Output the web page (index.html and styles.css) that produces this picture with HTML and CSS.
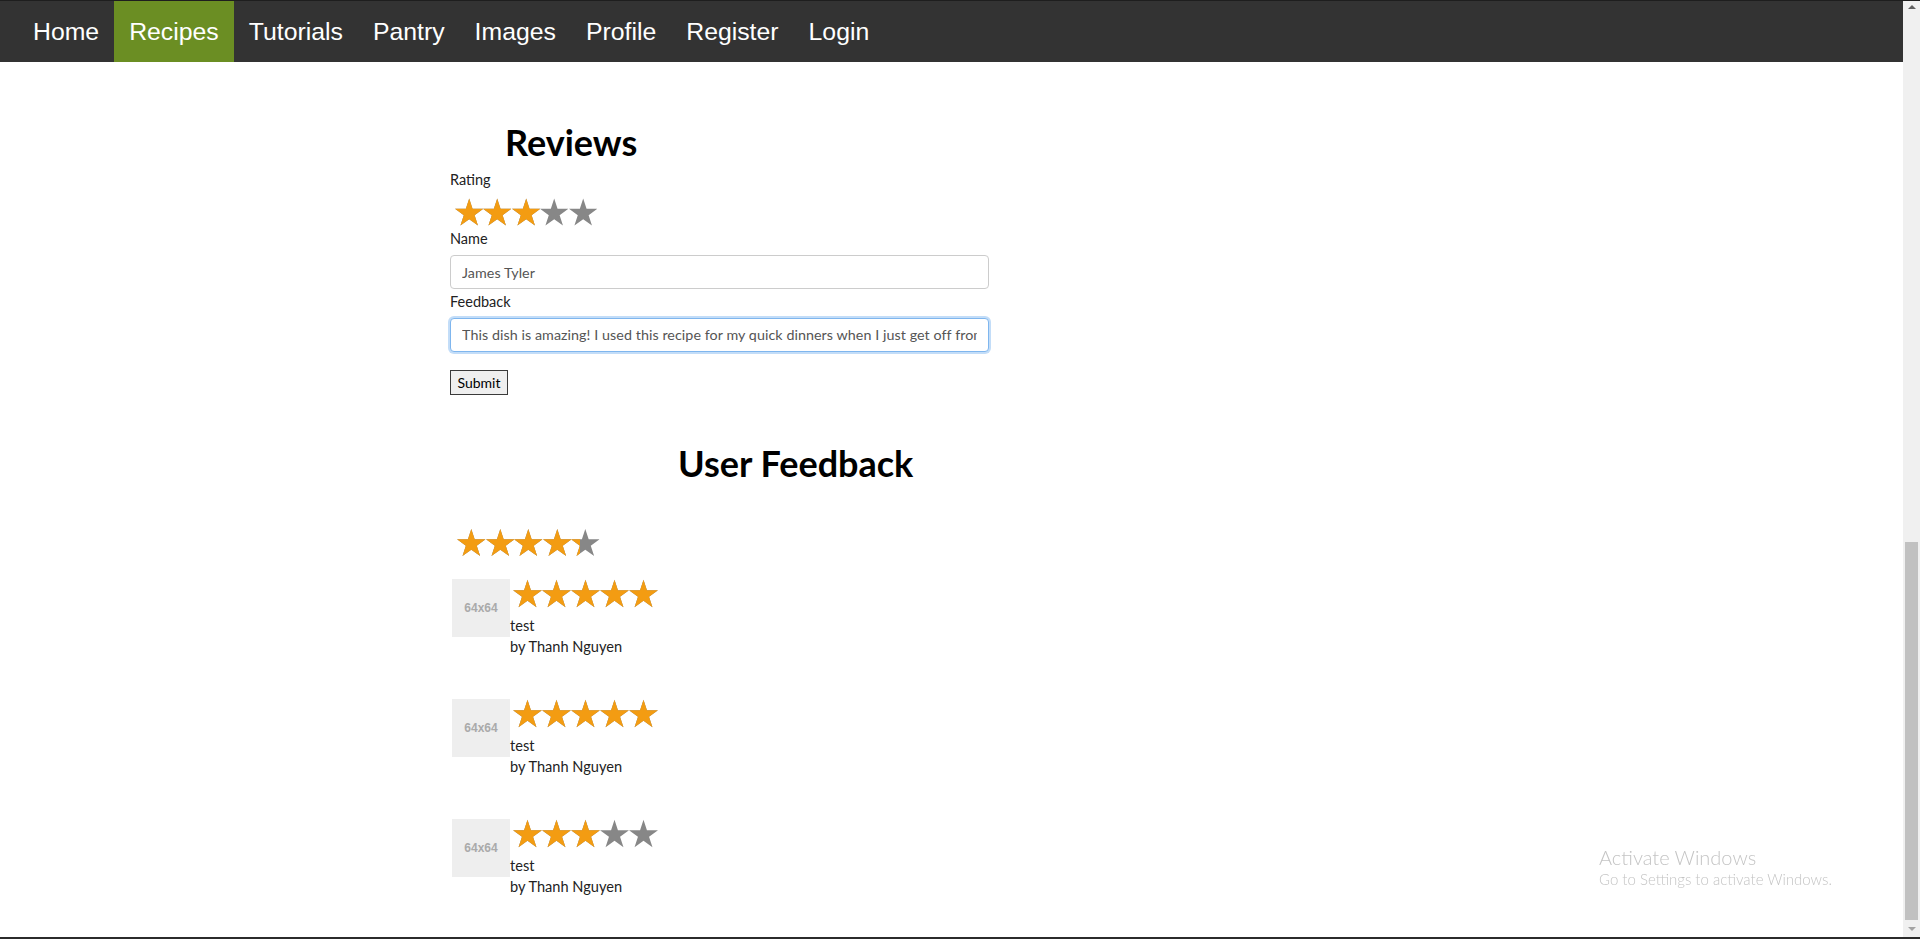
FILE: index.html
```html
<!DOCTYPE html>
<html lang="en">
<head>
<meta charset="utf-8">
<title>Recipes - Reviews</title>
<link rel="stylesheet" href="styles.css">
</head>
<body>
<svg class="svg-defs" width="0" height="0" aria-hidden="true">
  <defs>
    <symbol id="star" viewBox="0 0 95.1 90.45">
      <polygon fill="currentColor" points="47.55,0 58.78,34.55 95.1,34.55 65.72,55.9 76.94,90.45 47.55,69.1 18.16,90.45 29.38,55.9 0,34.55 36.32,34.55"/>
    </symbol>
  </defs>
</svg>
<div class="frame">
  <div class="page">
    <nav class="topnav">
      <a class="nav-link" href="#">Home</a>
      <a class="nav-link active" href="#">Recipes</a>
      <a class="nav-link" href="#">Tutorials</a>
      <a class="nav-link" href="#">Pantry</a>
      <a class="nav-link" href="#">Images</a>
      <a class="nav-link" href="#">Profile</a>
      <a class="nav-link" href="#">Register</a>
      <a class="nav-link" href="#">Login</a>
    </nav>
    <main class="content">
      <section class="review-form">
        <h2 class="heading heading-reviews">Reviews</h2>
        <label class="field-label">Rating</label>
        <div class="rating rating-form">
          <div class="rating-track">
            <svg class="star"><use href="#star"/></svg><svg class="star"><use href="#star"/></svg><svg class="star"><use href="#star"/></svg><svg class="star"><use href="#star"/></svg><svg class="star"><use href="#star"/></svg>
          </div>
          <div class="rating-fill" style="width:60%">
            <svg class="star"><use href="#star"/></svg><svg class="star"><use href="#star"/></svg><svg class="star"><use href="#star"/></svg><svg class="star"><use href="#star"/></svg><svg class="star"><use href="#star"/></svg>
          </div>
        </div>
        <label class="field-label label-name" for="name">Name</label>
        <input class="text-input" id="name" type="text" value="James Tyler">
        <label class="field-label label-feedback" for="feedback">Feedback</label>
        <input class="text-input is-focused" id="feedback" type="text" value="This dish is amazing! I used this recipe for my quick dinners when I just get off from work.">
        <button class="btn-submit" type="button">Submit</button>
      </section>

      <section class="user-feedback">
        <h2 class="heading heading-feedback">User Feedback</h2>
        <div class="rating rating-summary">
          <div class="rating-track">
            <svg class="star"><use href="#star"/></svg><svg class="star"><use href="#star"/></svg><svg class="star"><use href="#star"/></svg><svg class="star"><use href="#star"/></svg><svg class="star"><use href="#star"/></svg>
          </div>
          <div class="rating-fill" style="width:86%">
            <svg class="star"><use href="#star"/></svg><svg class="star"><use href="#star"/></svg><svg class="star"><use href="#star"/></svg><svg class="star"><use href="#star"/></svg><svg class="star"><use href="#star"/></svg>
          </div>
        </div>

        <div class="media">
          <div class="media-thumb">64x64</div>
          <div class="media-body">
            <div class="rating media-rating">
              <div class="rating-track">
                <svg class="star"><use href="#star"/></svg><svg class="star"><use href="#star"/></svg><svg class="star"><use href="#star"/></svg><svg class="star"><use href="#star"/></svg><svg class="star"><use href="#star"/></svg>
              </div>
              <div class="rating-fill" style="width:100%">
                <svg class="star"><use href="#star"/></svg><svg class="star"><use href="#star"/></svg><svg class="star"><use href="#star"/></svg><svg class="star"><use href="#star"/></svg><svg class="star"><use href="#star"/></svg>
              </div>
            </div>
            <p class="media-text">test</p>
            <p class="media-text">by Thanh Nguyen</p>
          </div>
        </div>

        <div class="media">
          <div class="media-thumb">64x64</div>
          <div class="media-body">
            <div class="rating media-rating">
              <div class="rating-track">
                <svg class="star"><use href="#star"/></svg><svg class="star"><use href="#star"/></svg><svg class="star"><use href="#star"/></svg><svg class="star"><use href="#star"/></svg><svg class="star"><use href="#star"/></svg>
              </div>
              <div class="rating-fill" style="width:100%">
                <svg class="star"><use href="#star"/></svg><svg class="star"><use href="#star"/></svg><svg class="star"><use href="#star"/></svg><svg class="star"><use href="#star"/></svg><svg class="star"><use href="#star"/></svg>
              </div>
            </div>
            <p class="media-text">test</p>
            <p class="media-text">by Thanh Nguyen</p>
          </div>
        </div>

        <div class="media">
          <div class="media-thumb">64x64</div>
          <div class="media-body">
            <div class="rating media-rating">
              <div class="rating-track">
                <svg class="star"><use href="#star"/></svg><svg class="star"><use href="#star"/></svg><svg class="star"><use href="#star"/></svg><svg class="star"><use href="#star"/></svg><svg class="star"><use href="#star"/></svg>
              </div>
              <div class="rating-fill" style="width:60%">
                <svg class="star"><use href="#star"/></svg><svg class="star"><use href="#star"/></svg><svg class="star"><use href="#star"/></svg><svg class="star"><use href="#star"/></svg><svg class="star"><use href="#star"/></svg>
              </div>
            </div>
            <p class="media-text">test</p>
            <p class="media-text">by Thanh Nguyen</p>
          </div>
        </div>
      </section>
    </main>
  </div>
  <div class="scrollbar">
    <div class="sb-button"><span class="sb-arrow-up"></span></div>
    <div class="sb-thumb"></div>
    <div class="sb-button"><span class="sb-arrow-down"></span></div>
  </div>
</div>
<div class="os-watermark">
  <div class="wm-title">Activate Windows</div>
  <div class="wm-sub">Go to Settings to activate Windows.</div>
</div>
</body>
</html>
```

FILE: styles.css
```css
html, body {
  margin: 0;
  padding: 0;
}

body {
  font-family: Lato, "Open Sans", sans-serif;
  color: #222;
  background: #fff;
  overflow: hidden;
}

.svg-defs {
  position: absolute;
  width: 0;
  height: 0;
  overflow: hidden;
}

.frame {
  display: flex;
  height: 939px;
  box-sizing: border-box;
  border-top: 1px solid #1e1e1e;
  border-bottom: 2px solid #2b2b2b;
  overflow: hidden;
}

.page {
  flex: 1;
  min-width: 0;
  overflow: hidden;
}

/* ---------- top navigation ---------- */
.topnav {
  display: flex;
  height: 61px;
  background: #333;
  padding-left: 18px;
}

.nav-link {
  display: block;
  padding: 1px 15px 0;
  line-height: 60px;
  font-family: "Liberation Sans", Arial, sans-serif;
  font-size: 24.8px;
  color: #fff;
  text-decoration: none;
}

.nav-link.active {
  background: #6b8e23;
}

/* ---------- content ---------- */
.content {
  padding: 62px 0 0 450px;
}

.heading {
  margin: 0;
  font-size: 36px;
  line-height: 36px;
  font-weight: 700;
  color: #000;
}

.heading-reviews {
  padding-left: 55px;
  margin-bottom: 10px;
}

.review-form {
  width: 539px;
}

.field-label {
  display: block;
  font-size: 14.5px;
  line-height: 20px;
  color: #222;
}

.label-name {
  margin-bottom: 6px;
}

.label-feedback {
  margin-top: 2.5px;
  margin-bottom: 6px;
}

.text-input {
  display: block;
  box-sizing: border-box;
  width: 539px;
  height: 34px;
  margin: 0;
  padding: 0 11px;
  border: 1px solid #ccc;
  border-radius: 4px;
  background: #fff;
  font-family: Lato, "Open Sans", sans-serif;
  font-size: 14.3px;
  letter-spacing: 0.06px;
  color: #555;
  outline: none;
}

.text-input.is-focused {
  border-color: #7fb6ee;
  box-shadow: 0 0 0 2px #c3ddf8;
}

.btn-submit {
  display: block;
  width: 58px;
  height: 25px;
  margin-top: 18px;
  padding: 0;
  border: 1px solid #3a3a3a;
  border-radius: 0;
  background: #efefef;
  font-family: Lato, "Open Sans", sans-serif;
  font-size: 14px;
  color: #000;
}

/* ---------- star ratings ---------- */
.rating {
  position: relative;
  display: flex;
  width: max-content;
}

.rating-track {
  display: flex;
  color: #878787;
}

.rating-fill {
  position: absolute;
  top: 0;
  left: 0;
  bottom: 0;
  display: flex;
  overflow: hidden;
  color: #f39c12;
}

.star {
  display: block;
  flex: none;
}

.rating-form {
  margin: 8px 0 3px 5px;
}

.rating-form .star {
  width: 28.4px;
  height: 28px;
}

/* ---------- user feedback ---------- */
.user-feedback {
  margin-top: 50.5px;
}

.heading-feedback {
  padding-left: 228px;
}

.rating-summary {
  margin: 47px 0 22px 7px;
}

.rating-summary .star {
  width: 28.6px;
  height: 29px;
}

.media {
  display: flex;
  align-items: flex-start;
  margin-left: 2px;
  margin-bottom: 42px;
}

.media-thumb {
  flex: none;
  display: flex;
  align-items: center;
  justify-content: center;
  width: 58px;
  height: 58px;
  background: #eee;
  font-family: "Liberation Sans", Arial, sans-serif;
  font-weight: 700;
  font-size: 12px;
  color: #aaa;
}

.media-body {
  font-size: 14.6px;
  line-height: 21px;
}

.media-rating {
  margin: 0 0 7px 3px;
}

.media-rating .star {
  width: 29px;
  height: 29px;
}

.media-text {
  margin: 0;
  color: #222;
}

/* ---------- fake scrollbar ---------- */
.scrollbar {
  flex: none;
  width: 17px;
  display: flex;
  flex-direction: column;
  align-items: center;
  background: #f0f0f0;
}

.sb-button {
  flex: none;
  height: 17px;
  width: 17px;
  display: flex;
  align-items: center;
  justify-content: center;
}

.sb-arrow-up {
  width: 0;
  height: 0;
  border-left: 4px solid transparent;
  border-right: 4px solid transparent;
  border-bottom: 4px solid #606060;
  margin-top: -6px;
}

.sb-arrow-down {
  width: 0;
  height: 0;
  border-left: 4px solid transparent;
  border-right: 4px solid transparent;
  border-top: 4px solid #a3a3a3;
}

.sb-thumb {
  margin-top: auto;
  width: 13px;
  height: 378px;
  background: #c1c1c1;
}

/* ---------- OS watermark overlay ---------- */
.os-watermark {
  position: fixed;
  left: 1599px;
  top: 844.5px;
  color: #c4c4c4;
  font-family: Lato, "Open Sans", sans-serif;
  font-weight: 300;
  pointer-events: none;
}

.wm-title {
  font-size: 20px;
  line-height: 24px;
}

.wm-sub {
  font-size: 15px;
  line-height: 21px;
}
```
